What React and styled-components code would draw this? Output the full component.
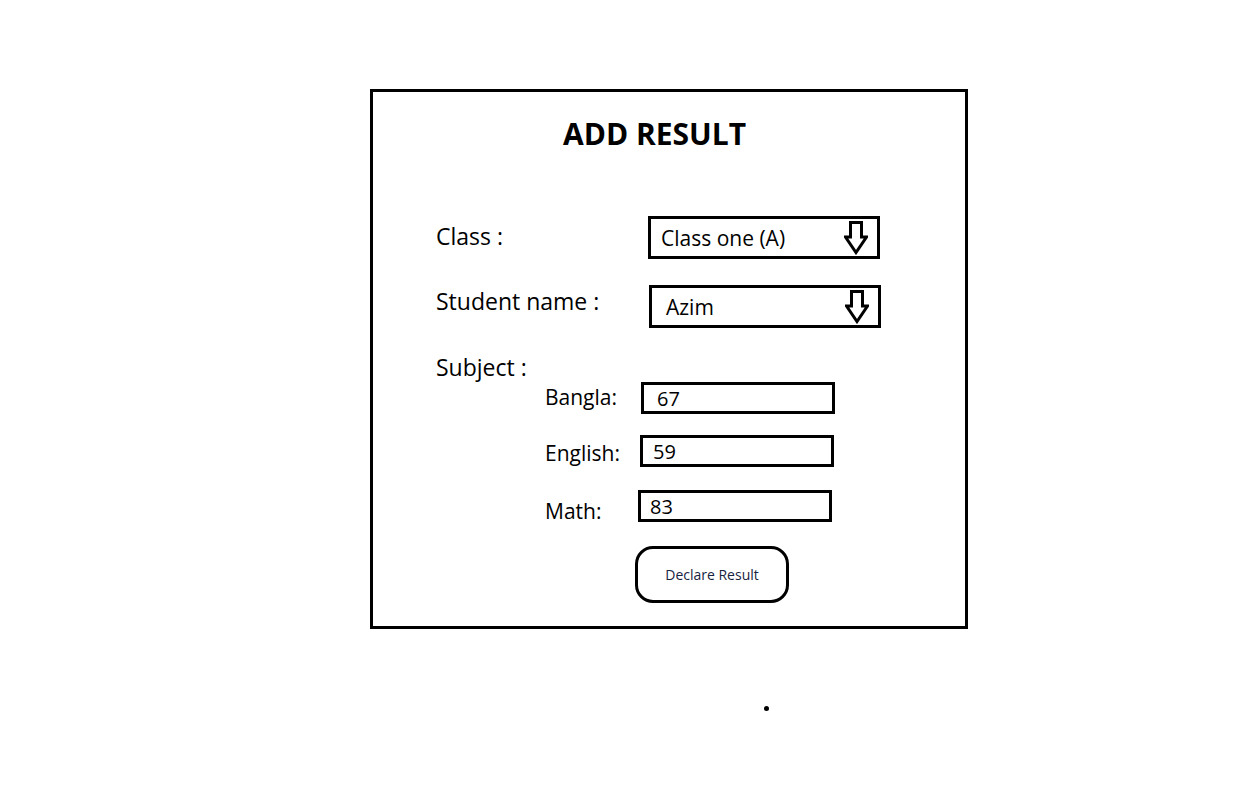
import React from 'react'
import styled, { createGlobalStyle } from 'styled-components'

const GlobalStyle = createGlobalStyle`
  html, body {
    margin: 0;
    padding: 0;
    background: #fff;
  }
  body {
    font-family: "Open Sans", "Noto Sans", sans-serif;
    color: #000;
  }
`

const Page = styled.div`
  position: relative;
  width: 1255px;
  height: 801px;
  padding: 89px 0 0 370px;
  box-sizing: border-box;
`

const Card = styled.div`
  width: 598px;
  height: 540px;
  box-sizing: border-box;
  border: 3px solid #000;
  display: flex;
  flex-direction: column;
`

const Title = styled.h1`
  margin: 24px 0 0;
  padding-left: 190px;
  font-size: 30px;
  line-height: 36px;
  font-weight: 700;
`

const FieldRow = styled.div`
  display: flex;
  align-items: center;
  margin-top: ${p => p.$top}px;
  padding-left: ${p => p.$indent}px;
`

const Label = styled.span`
  width: ${p => p.$width}px;
  flex-shrink: 0;
  font-size: ${p => p.$size || 23}px;
  line-height: 1;
  transform: translateY(${p => p.$shift || 0}px);
`

const SubjectHeading = styled.div`
  margin-top: 27px;
  padding-left: 63px;
  font-size: 23px;
  line-height: 24px;
`

const SelectBox = styled.div`
  width: 232px;
  height: 43px;
  box-sizing: border-box;
  border: 3px solid #000;
  display: flex;
  align-items: center;
  padding: 0 9px 0 ${p => p.$pad}px;
  font-size: 21px;
`

const ArrowIcon = styled.svg`
  margin-left: auto;
  width: 24px;
  height: 34px;
  flex-shrink: 0;
`

const MarkBox = styled.div`
  width: 194px;
  height: 32px;
  box-sizing: border-box;
  border: 3px solid #000;
  display: flex;
  align-items: center;
  padding-left: ${p => p.$pad}px;
  font-size: 20px;
`

const ButtonRow = styled.div`
  margin-top: 24px;
  padding-left: 262px;
`

const DeclareButton = styled.div`
  width: 154px;
  height: 57px;
  box-sizing: border-box;
  border: 3px solid #000;
  border-radius: 18px;
  display: flex;
  align-items: center;
  justify-content: center;
  font-size: 14px;
  color: #17233f;
`

const Dot = styled.span`
  position: absolute;
  left: 764px;
  top: 706px;
  width: 5px;
  height: 5px;
  border-radius: 50%;
  background: #000;
`

const DownArrow = () => (
  <ArrowIcon viewBox="0 0 24 34">
    <path
      d="M6.5 1.5 H17.5 V16 H22.5 L12 31.5 L1.5 16 H6.5 Z"
      fill="#fff"
      stroke="#000"
      strokeWidth="3"
      strokeLinejoin="miter"
    />
  </ArrowIcon>
)

const marks = [
  { subject: 'Bangla:', value: '67', top: 3, label: 96, pad: 13, shift: -1 },
  { subject: 'English:', value: '59', top: 21, label: 95, pad: 10, shift: 2 },
  { subject: 'Math:', value: '83', top: 23, label: 93, pad: 9, shift: 5 },
]

export default function App() {
  return (
    <>
      <GlobalStyle />
      <Page>
        <Card>
          <Title>ADD RESULT</Title>

          <FieldRow $top={64} $indent={63}>
            <Label $width={212} $shift={-1}>Class :</Label>
            <SelectBox $pad={10}>
              Class one (A)
              <DownArrow />
            </SelectBox>
          </FieldRow>

          <FieldRow $top={26} $indent={63}>
            <Label $width={213} $shift={-5}>Student name :</Label>
            <SelectBox $pad={14}>
              Azim
              <DownArrow />
            </SelectBox>
          </FieldRow>

          <SubjectHeading>Subject :</SubjectHeading>

          {marks.map(m => (
            <FieldRow key={m.subject} $top={m.top} $indent={172}>
              <Label $width={m.label} $size={21} $shift={m.shift}>{m.subject}</Label>
              <MarkBox $pad={m.pad}>{m.value}</MarkBox>
            </FieldRow>
          ))}

          <ButtonRow>
            <DeclareButton>Declare Result</DeclareButton>
          </ButtonRow>
        </Card>
        <Dot />
      </Page>
    </>
  )
}
